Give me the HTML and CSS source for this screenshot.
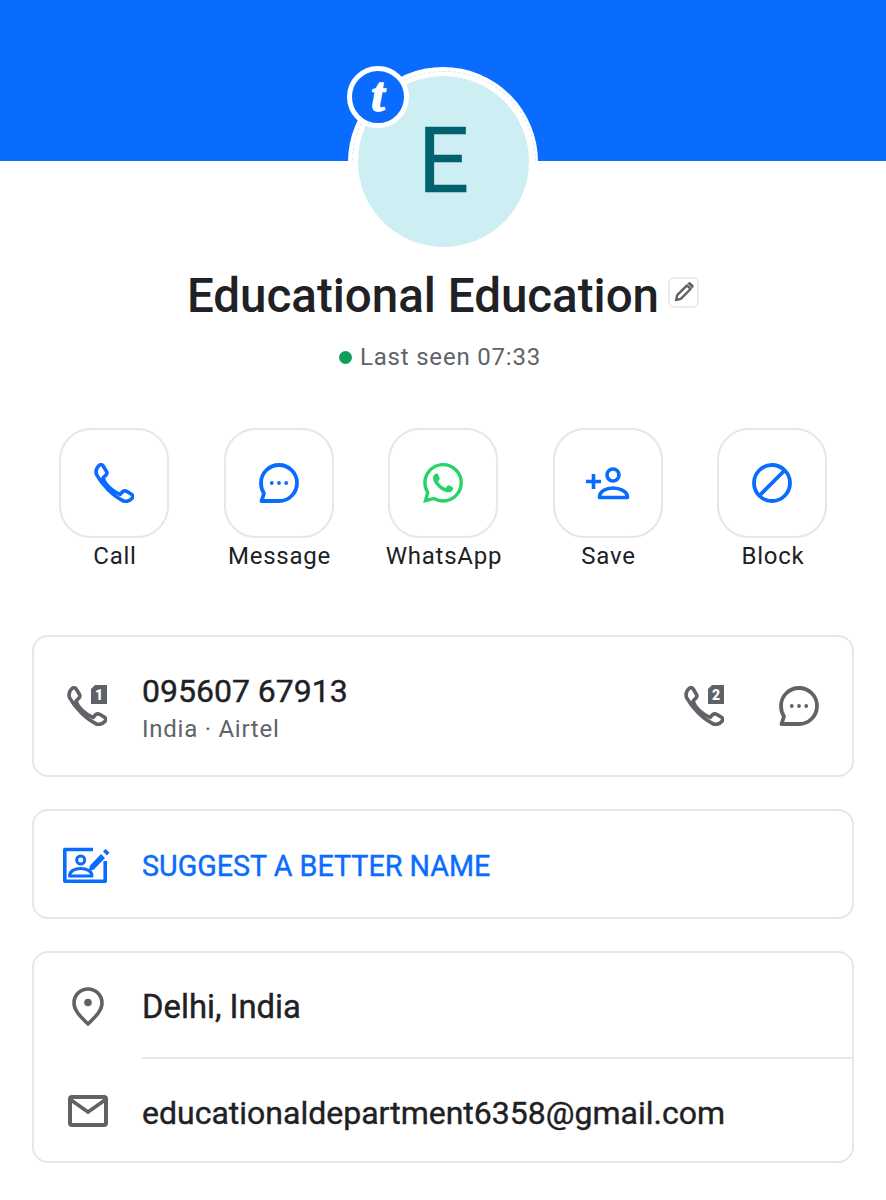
FILE: index.html
```html
<!DOCTYPE html>
<html lang="en">
<head>
    <meta charset="UTF-8">
    <meta name="viewport" content="width=device-width, initial-scale=1.0">
    <title>Educational Education</title>
    <link rel="stylesheet" href="styles.css">
</head>
<body>
    <svg class="defs" width="0" height="0">
        <symbol id="phone" viewBox="0 0 40 40">
            <path d="M5 2.5C6.5 1.2 8.3 1.5 9.2 3L12.5 8.5C13.3 10 13 11.3 11.5 12.5L9 15C11 21 18 27.5 26 31.5L28.5 28.8C30 27.7 31.5 27.7 33 28.5L37.5 31.3C39 32.3 39 34.2 37.8 35.5C35.5 38 32.5 38.8 29.5 38C19 33 8 22 2.5 11.5C1.5 8 2.8 4.5 5 2.5Z" fill="none" stroke="currentColor" stroke-width="3.6" stroke-linejoin="round"/>
        </symbol>
        <symbol id="bubble" viewBox="0 0 40 40">
            <path d="M20 2C30 2 38 10 38 20S30 38 20 38H2.5L5 30.5C3 27.5 2 24 2 20 2 10 10 2 20 2Z" fill="none" stroke="currentColor" stroke-width="3.8" stroke-linejoin="round"/>
            <circle cx="12.8" cy="20" r="1.9" fill="currentColor"/>
            <circle cx="20" cy="20" r="1.9" fill="currentColor"/>
            <circle cx="27.2" cy="20" r="1.9" fill="currentColor"/>
        </symbol>
        <symbol id="sim" viewBox="0 0 16 19">
            <path d="M4 0H16V19H0V4Z" fill="currentColor"/>
        </symbol>
    </svg>

    <header class="banner"></header>

    <div class="avatar-wrap">
        <div class="avatar-ring">
            <div class="avatar">E</div>
        </div>
        <div class="badge"><span>t</span></div>
    </div>

    <div class="name-row">
        <h1>Educational Education</h1>
        <span class="edit">
            <svg width="20" height="20" viewBox="0 0 20 20">
                <path d="M2 18L3.2 13.2L13 3.4L16.6 7L6.8 16.8Z" fill="none" stroke="#5f6368" stroke-width="2.4" stroke-linejoin="round"/>
                <path d="M14.5 1.5L15.8 0.8L19 4L18.4 5.5Z" fill="#5f6368" stroke="#5f6368" stroke-width="1.5"/>
            </svg>
        </span>
    </div>

    <p class="status"><i class="dot"></i>Last seen 07:33</p>

    <div class="actions">
        <div class="action">
            <div class="action-box">
                <svg class="blue" width="40" height="40"><use href="#phone"/></svg>
            </div>
            <span>Call</span>
        </div>
        <div class="action">
            <div class="action-box">
                <svg class="blue" width="40" height="40"><use href="#bubble"/></svg>
            </div>
            <span>Message</span>
        </div>
        <div class="action">
            <div class="action-box">
                <svg width="40" height="40" viewBox="0 0 24 24">
                    <path fill="#25d366" d="M17.472 14.382c-.297-.149-1.758-.867-2.03-.967-.273-.099-.471-.148-.67.15-.197.297-.767.966-.94 1.164-.173.199-.347.223-.644.075-.297-.15-1.255-.463-2.39-1.475-.883-.788-1.48-1.761-1.653-2.059-.173-.297-.018-.458.13-.606.134-.133.298-.347.446-.52.149-.174.198-.298.298-.497.099-.198.05-.371-.025-.52-.075-.149-.669-1.612-.916-2.207-.242-.579-.487-.5-.669-.51-.173-.008-.371-.01-.57-.01-.198 0-.52.074-.792.372-.272.297-1.04 1.016-1.04 2.479 0 1.462 1.065 2.875 1.213 3.074.149.198 2.096 3.2 5.077 4.487.709.306 1.262.489 1.694.625.712.227 1.36.195 1.871.118.571-.085 1.758-.719 2.006-1.413.248-.694.248-1.289.173-1.413-.074-.124-.272-.198-.57-.347m-5.421 7.403h-.004a9.87 9.87 0 01-5.031-1.378l-.361-.214-3.741.982.998-3.648-.235-.374a9.86 9.86 0 01-1.51-5.26c.001-5.45 4.436-9.884 9.888-9.884 2.64 0 5.122 1.03 6.988 2.898a9.825 9.825 0 012.893 6.994c-.003 5.45-4.437 9.884-9.885 9.884m8.413-18.297A11.815 11.815 0 0012.05 0C5.495 0 .16 5.335.157 11.892c0 2.096.547 4.142 1.588 5.945L.057 24l6.305-1.654a11.882 11.882 0 005.683 1.448h.005c6.554 0 11.89-5.335 11.893-11.893a11.821 11.821 0 00-3.48-8.413z"/>
                </svg>
            </div>
            <span>WhatsApp</span>
        </div>
        <div class="action">
            <div class="action-box">
                <svg class="blue" width="46" height="34" viewBox="0 0 46 34">
                    <circle cx="28" cy="9" r="6" fill="none" stroke="currentColor" stroke-width="3.6"/>
                    <path d="M14.5 31.5C14.5 25 21.5 22 28 22S42.5 25 42.5 31.5Z" fill="none" stroke="currentColor" stroke-width="3.6" stroke-linejoin="round"/>
                    <path d="M1 15.5H16M8.5 8V23" fill="none" stroke="currentColor" stroke-width="3.6"/>
                </svg>
            </div>
            <span>Save</span>
        </div>
        <div class="action">
            <div class="action-box">
                <svg class="blue" width="40" height="40" viewBox="0 0 40 40">
                    <circle cx="20" cy="20" r="18" fill="none" stroke="currentColor" stroke-width="3.8"/>
                    <path d="M7.5 32.5L32.5 7.5" stroke="currentColor" stroke-width="3.8"/>
                </svg>
            </div>
            <span>Block</span>
        </div>
    </div>

    <main class="cards">
        <section class="card card-phone">
            <div class="card-icon">
                <span class="sim-phone first-sim">
                    <svg class="gray" width="40" height="40"><use href="#phone"/></svg>
                    <span class="sim"><svg class="gray" width="16" height="19"><use href="#sim"/></svg><b>1</b></span>
                </span>
            </div>
            <div class="phone-text">
                <div class="number">095607 67913</div>
                <div class="carrier">India · Airtel</div>
            </div>
            <div class="phone-actions">
                <span class="sim-phone">
                    <svg class="gray" width="40" height="40"><use href="#phone"/></svg>
                    <span class="sim"><svg class="gray" width="16" height="19"><use href="#sim"/></svg><b>2</b></span>
                </span>
                <svg class="gray" width="40" height="40"><use href="#bubble"/></svg>
            </div>
        </section>

        <section class="card card-suggest">
            <div class="card-icon suggest-icon">
                <svg class="blue" width="47" height="37" viewBox="0 0 47 37">
                    <path d="M30 3.5H1.8V35.2H42.2V15" fill="none" stroke="currentColor" stroke-width="3.6" stroke-linejoin="round"/>
                    <circle cx="17.7" cy="14" r="4" fill="none" stroke="currentColor" stroke-width="3"/>
                    <path d="M6.5 30C6.5 25 12 22.5 17.7 22.5S29 25 29 30Z" fill="none" stroke="currentColor" stroke-width="3" stroke-linejoin="round"/>
                    <path d="M25.5 25.5L27 19.5L38 8L42 12L31 23.5Z" fill="currentColor"/>
                    <path d="M40 5.5L42.5 3L46.5 6.5L44 9.5Z" fill="currentColor"/>
                </svg>
            </div>
            <div class="suggest-text">SUGGEST A BETTER NAME</div>
        </section>

        <section class="card card-info">
            <div class="info-row info-place">
                <div class="card-icon">
                    <svg class="gray" width="32" height="39" viewBox="0 0 32 39">
                        <path d="M16 37C10 31 2 24 2 16A14 14 0 0 1 30 16C30 24 22 31 16 37Z" fill="none" stroke="currentColor" stroke-width="3.6" stroke-linejoin="round"/>
                        <circle cx="16" cy="15.5" r="3.8" fill="currentColor"/>
                    </svg>
                </div>
                <div class="info-text">Delhi, India</div>
            </div>
            <div class="info-row info-mail">
                <div class="card-icon">
                    <svg class="gray" width="40" height="32" viewBox="0 0 40 32">
                        <rect x="2" y="2" width="36" height="28" rx="2" fill="none" stroke="currentColor" stroke-width="4"/>
                        <path d="M3 5L20 17L37 5" fill="none" stroke="currentColor" stroke-width="3.6"/>
                    </svg>
                </div>
                <div class="info-text">educationaldepartment6358@gmail.com</div>
            </div>
        </section>
    </main>
</body>
</html>
```

FILE: styles.css
```css
:root {
    --blue: #0a6cff;
    --gray: #5f6368;
    --text: #202124;
    --line: #e6e7e9;
}

* {
    box-sizing: border-box;
}

body {
    margin: 0;
    background: #fff;
    color: var(--text);
    font-family: Roboto, 'Liberation Sans', sans-serif;
}

.defs {
    display: block;
    height: 0;
}

.blue {
    color: var(--blue);
}

.gray {
    color: var(--gray);
}

.banner {
    height: 161px;
    background: var(--blue);
}

/* avatar */
.avatar-wrap {
    position: relative;
    width: 190px;
    height: 190px;
    margin: -94px auto 0;
}

.avatar-ring {
    position: relative;
    width: 190px;
    height: 190px;
    padding: 9px 9px 9px 10px;
    border-radius: 50%;
    background: #fff;
}

/* thin line round the top half only */
.avatar-ring::before {
    content: "";
    position: absolute;
    top: 4px;
    left: 4px;
    width: 182px;
    height: 90px;
    border: 1px dashed #d9e3fb;
    border-bottom: none;
    border-radius: 91px 91px 0 0;
}

.avatar {
    position: relative;
    display: flex;
    align-items: center;
    justify-content: center;
    width: 171px;
    height: 171px;
    border-radius: 50%;
    background: #cdeef3;
    color: #00626e;
    font-size: 90px;
    line-height: 1;
    -webkit-text-stroke: 0.5px #00626e;
}

.badge {
    position: absolute;
    top: -1px;
    left: -1px;
    display: flex;
    align-items: center;
    justify-content: center;
    width: 62px;
    height: 62px;
    border: 5px solid #fff;
    border-radius: 50%;
    background: var(--blue);
}

.badge span {
    margin-top: -4px;
    color: #fff;
    font-family: 'Liberation Serif', serif;
    font-size: 48px;
    font-style: italic;
    font-weight: 700;
    line-height: 1;
    -webkit-text-stroke: 1.5px #fff;
}

/* name */
.name-row {
    display: flex;
    align-items: center;
    justify-content: center;
    gap: 9px;
    margin-top: 11px;
}

h1 {
    margin: 0;
    font-size: 47.5px;
    font-weight: 500;
    line-height: 56px;
}

.edit {
    display: flex;
    align-items: center;
    justify-content: center;
    width: 31px;
    height: 31px;
    margin-top: -8px;
    border: 2px solid #ececec;
    border-radius: 6px;
}

.status {
    display: flex;
    align-items: center;
    justify-content: center;
    margin: 17px 0 0;
    padding-right: 6px;
    color: var(--gray);
    font-size: 24px;
    line-height: 32px;
    letter-spacing: 0.8px;
}

.dot {
    width: 13px;
    height: 13px;
    margin-right: 8px;
    border-radius: 50%;
    background: #0f9d58;
}

/* action buttons */
.actions {
    display: flex;
    justify-content: space-between;
    margin-top: 55px;
    padding: 0 59px;
}

.action {
    display: flex;
    flex-direction: column;
    align-items: center;
    width: 110px;
}

.action-box {
    display: flex;
    align-items: center;
    justify-content: center;
    width: 110px;
    height: 110px;
    border: 2px solid var(--line);
    border-radius: 32px;
}

.action span {
    margin-top: 2px;
    margin-left: 2px;
    font-size: 24px;
    line-height: 32px;
    letter-spacing: 0.75px;
    white-space: nowrap;
}

/* cards */
.cards {
    display: flex;
    flex-direction: column;
    gap: 32px;
    margin-top: 63px;
    padding: 0 32px;
}

.card {
    border: 2px solid var(--line);
    border-radius: 16px;
}

.card-icon {
    display: flex;
    align-items: center;
    justify-content: center;
    flex: none;
    width: 108px;
}

.card-phone {
    display: flex;
    align-items: center;
    height: 142px;
    padding-right: 33px;
}

.sim-phone {
    position: relative;
    display: block;
    width: 40px;
    height: 40px;
}

.first-sim {
    margin-right: 2px;
}

.sim-phone > svg {
    display: block;
}

.sim {
    position: absolute;
    top: -1px;
    right: 0;
    width: 16px;
    height: 19px;
}

.sim svg {
    display: block;
}

.sim b {
    position: absolute;
    inset: 0;
    color: #fff;
    font-size: 14px;
    font-weight: 900;
    line-height: 20px;
    text-align: center;
}

.phone-text {
    flex: 1;
    padding-top: 2px;
}

.number {
    font-size: 32px;
    line-height: 40px;
    -webkit-text-stroke: 0.4px var(--text);
}

.carrier {
    margin-top: 3px;
    color: var(--gray);
    font-size: 24px;
    line-height: 30px;
    letter-spacing: 0.75px;
}

.phone-actions {
    display: flex;
    align-items: center;
    gap: 55px;
}

.card-suggest {
    display: flex;
    align-items: center;
    height: 110px;
}

.suggest-icon {
    padding-right: 4px;
}

.suggest-text {
    padding-top: 3px;
    color: var(--blue);
    font-size: 28.7px;
    -webkit-text-stroke: 0.4px var(--blue);
}

.card-info {
    height: 212px;
}

.info-row {
    display: flex;
    align-items: center;
}

.info-place {
    height: 106px;
}

.info-mail {
    height: 104px;
}

.info-text {
    font-size: 32px;
    -webkit-text-stroke: 0.4px var(--text);
}

.info-place .info-text {
    align-self: stretch;
    display: flex;
    align-items: center;
    flex: 1;
    padding-top: 3px;
    font-size: 32.8px;
    border-bottom: 2px solid var(--line);
}

.info-mail .info-text {
    padding-top: 4px;
}
```
